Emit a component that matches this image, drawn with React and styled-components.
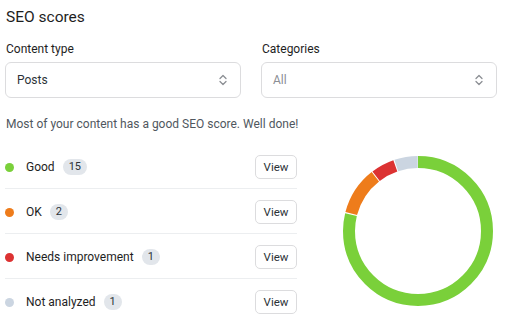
import React from 'react'
import styled, { createGlobalStyle } from 'styled-components'

const GlobalStyle = createGlobalStyle`
  body {
    margin: 0;
    background: #ffffff;
    font-family: Roboto, "Noto Sans", sans-serif;
    color: #1e1e1e;
  }
`

const scores = [
  { key: 'good', label: 'Good', count: 15, color: '#7ad03a' },
  { key: 'ok', label: 'OK', count: 2, color: '#ee7c1b' },
  { key: 'bad', label: 'Needs improvement', count: 1, color: '#dc3232' },
  { key: 'na', label: 'Not analyzed', count: 1, color: '#cbd5e1' },
]

function Chevrons() {
  return (
    <svg width="10" height="14" viewBox="0 0 10 14" fill="none" stroke="#8c8f94" strokeWidth="1.3" strokeLinecap="round" strokeLinejoin="round">
      <path d="M2 5.5 L5 2.5 L8 5.5" />
      <path d="M2 8.5 L5 11.5 L8 8.5" />
    </svg>
  )
}

function Donut({ data }) {
  const total = data.reduce((s, d) => s + d.count, 0)
  const r = 69
  const c = 2 * Math.PI * r
  let acc = 0
  return (
    <svg width="150" height="150" viewBox="0 0 150 150">
      <g transform="rotate(-90 75 75)">
        {data.map((d) => {
          const len = (d.count / total) * c
          const seg = (
            <circle
              key={d.key}
              cx="75"
              cy="75"
              r={r}
              fill="none"
              stroke={d.color}
              strokeWidth="12"
              strokeDasharray={`${Math.max(len - 1, 0)} ${c}`}
              strokeDashoffset={-acc}
            />
          )
          acc += len
          return seg
        })}
      </g>
    </svg>
  )
}

function App() {
  return (
    <>
      <GlobalStyle />
      <Page>
        <Title>SEO scores</Title>
        <Filters>
          <Field>
            <Label>Content type</Label>
            <Select>
              <SelectValue>Posts</SelectValue>
              <Chevrons />
            </Select>
          </Field>
          <Field>
            <Label>Categories</Label>
            <Select>
              <SelectValue muted>All</SelectValue>
              <Chevrons />
            </Select>
          </Field>
        </Filters>
        <Summary>Most of your content has a good SEO score. Well done!</Summary>
        <Body>
          <List>
            {scores.map((s) => (
              <Row key={s.key}>
                <Dot color={s.color} />
                <RowLabel>{s.label}</RowLabel>
                <Badge>{s.count}</Badge>
                <ViewButton>View</ViewButton>
              </Row>
            ))}
          </List>
          <ChartWrap>
            <Donut data={scores} />
          </ChartWrap>
        </Body>
      </Page>
    </>
  )
}

const Page = styled.div`
  padding: 6px 15px 0 5px;
`

const Title = styled.h2`
  margin: 0 0 0 1px;
  font-size: 15.5px;
  font-weight: 400;
  line-height: 22px;
  color: #1e1e1e;
`

const Filters = styled.div`
  display: grid;
  grid-template-columns: 1fr 1fr;
  column-gap: 20px;
  margin-top: 13px;
`

const Field = styled.div`
  display: flex;
  flex-direction: column;
`

const Label = styled.div`
  font-size: 12px;
  line-height: 16px;
  margin-left: 1px;
  color: #1e1e1e;
`

const Select = styled.div`
  margin-top: 5px;
  height: 36px;
  box-sizing: border-box;
  border: 1px solid #dcdcde;
  border-radius: 6px;
  display: flex;
  align-items: center;
  justify-content: space-between;
  padding: 0 12px 0 11px;
`

const SelectValue = styled.span`
  font-size: 12px;
  color: ${(p) => (p.muted ? '#8c8f94' : '#2c3338')};
`

const Summary = styled.p`
  margin: 18px 0 0 1px;
  font-size: 12px;
  line-height: 16px;
  color: #50575e;
`

const Body = styled.div`
  display: flex;
  align-items: flex-start;
  margin-top: 12px;
`

const List = styled.div`
  width: 292px;
  display: flex;
  flex-direction: column;
`

const Row = styled.div`
  display: flex;
  align-items: center;
  height: 45px;
  padding-top: 2px;
  border-top: 1px solid #eceef0;
  box-sizing: border-box;
  &:first-child {
    height: 44px;
    border-top: none;
  }
`

const Dot = styled.span`
  width: 9px;
  height: 9px;
  border-radius: 50%;
  background: ${(p) => p.color};
  margin-right: 12px;
`

const RowLabel = styled.span`
  font-size: 12px;
  color: #1e1e1e;
`

const Badge = styled.span`
  margin-left: 8px;
  min-width: 18px;
  height: 16px;
  box-sizing: border-box;
  padding: 0 6px;
  border-radius: 8px;
  background: #e2e6eb;
  font-size: 11px;
  line-height: 16px;
  text-align: center;
  color: #2c3338;
`

const ViewButton = styled.button`
  margin-left: auto;
  width: 42px;
  height: 24px;
  border: 1px solid #dcdcde;
  border-radius: 5px;
  background: #fff;
  font-family: inherit;
  font-size: 11.5px;
  color: #2c3338;
  padding: 0;
`

const ChartWrap = styled.div`
  margin-left: 46px;
  margin-top: 12px;
  display: flex;
`

export default App
